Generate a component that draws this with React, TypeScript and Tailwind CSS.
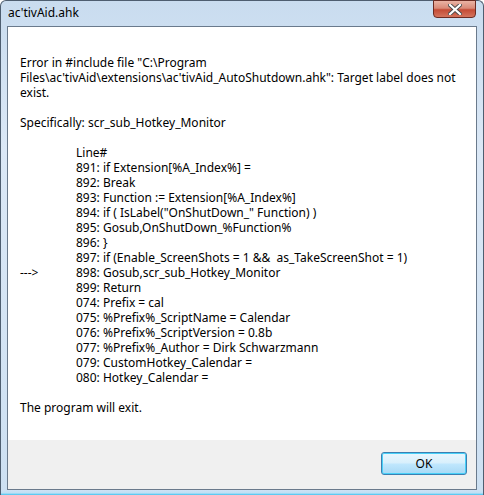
export default function App() {
  const lines: [string, string][] = [
    ["", "891: if Extension[%A_Index%] ="],
    ["", "892: Break"],
    ["", "893: Function := Extension[%A_Index%]"],
    ["", '894: if ( IsLabel("OnShutDown_" Function) )'],
    ["", "895: Gosub,OnShutDown_%Function%"],
    ["", "896: }"],
    ["", "897: if (Enable_ScreenShots = 1 &&  as_TakeScreenShot = 1)"],
    ["--->", "898: Gosub,scr_sub_Hotkey_Monitor"],
    ["", "899: Return"],
    ["", "074: Prefix = cal"],
    ["", "075: %Prefix%_ScriptName = Calendar"],
    ["", "076: %Prefix%_ScriptVersion = 0.8b"],
    ["", "077: %Prefix%_Author = Dirk Schwarzmann"],
    ["", "079: CustomHotkey_Calendar ="],
    ["", "080: Hotkey_Calendar ="],
  ];

  return (
    <div
      className="w-[484px] h-[495px] flex flex-col border-x border-t border-[#4e5e70] rounded-t-[6px] bg-[linear-gradient(180deg,#c9dcef_0%,#dbe8f6_30%,#cde0f2_100%)] text-black"
      style={{ fontFamily: '"Noto Sans", "Open Sans", sans-serif' }}
    >
      {/* title bar */}
      <div className="h-[25px] flex items-start justify-between pl-[7px] pr-[7px]">
        <div className="pt-[4px] text-[12px] leading-[16px]">ac'tivAid.ahk</div>
        <div className="w-[43px] h-[18px] -mt-px flex items-center justify-center rounded-b-[4px] border border-[#6b2b22] bg-[linear-gradient(180deg,#eab3a4_0%,#d98a78_45%,#c44b35_55%,#d4735c_100%)]">
          <svg width="14" height="11" viewBox="0 0 14 11">
            <path
              d="M2 1 L12 10 M12 1 L2 10"
              stroke="#4a4a4a"
              strokeWidth="4"
              strokeLinecap="square"
            />
            <path
              d="M2 1 L12 10 M12 1 L2 10"
              stroke="#ffffff"
              strokeWidth="2.2"
              strokeLinecap="square"
            />
          </svg>
        </div>
      </div>

      {/* client */}
      <div className="ml-[6px] w-[470px] h-[464px] border border-[#6a7a8c] flex flex-col">
        <div className="flex-1 bg-white pt-[28px] pl-[12px] text-[12px] leading-[15px]">
          <div>Error in #include file "C:\Program</div>
          <div>Files\ac'tivAid\extensions\ac'tivAid_AutoShutdown.ahk": Target label does not</div>
          <div>exist.</div>
          <div className="h-[15px]" />
          <div>Specifically: scr_sub_Hotkey_Monitor</div>
          <div className="h-[15px]" />
          <div className="pl-[56px]">Line#</div>
          {lines.map(([arrow, text], i) => (
            <div key={i} className="flex whitespace-pre">
              <div className="w-[56px]">{arrow}</div>
              <div>{text}</div>
            </div>
          ))}
          <div className="h-[15px]" />
          <div>The program will exit.</div>
        </div>
        <div className="h-[49px] bg-[#f0f0f0] flex justify-end items-start pt-[12px] pr-[9px]">
          <button className="w-[86px] h-[23px] rounded-[3px] border border-[#3c7fb1] bg-[linear-gradient(180deg,#eaf6fd_0%,#d9f0fc_45%,#bee6fd_55%,#a7d9f5_100%)] text-[12px] leading-[15px] shadow-[inset_0_0_0_1px_#48d0f8]">
            OK
          </button>
        </div>
      </div>
      <div className="flex-1 bg-[linear-gradient(180deg,#cfe2f3_0%,#bfe0f5_60%,#3cc4f0_100%)]" />
    </div>
  );
}
